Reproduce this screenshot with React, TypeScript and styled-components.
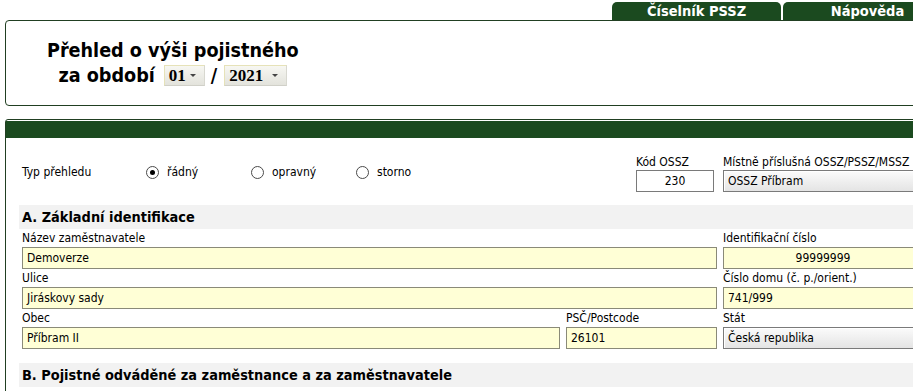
import React from 'react'
import styled, { createGlobalStyle } from 'styled-components'

const FONT = '"DejaVu Sans Condensed", "DejaVu Sans", sans-serif'
const GREEN = '#1b4a1f'
const FRAME = '#213f22'

const GlobalStyle = createGlobalStyle`
  html, body {
    margin: 0;
    padding: 0;
    overflow: hidden;
    background: #fff;
  }
  body {
    font-family: ${FONT};
    font-size: 12px;
    color: #000;
  }
`

const Page = styled.div`
  width: 948px;
  padding: 0 5px;
`

const TabBar = styled.div`
  display: flex;
  justify-content: flex-end;
  gap: 2px;
  padding-top: 2px;
  margin-right: 1px;
`

const Tab = styled.div`
  width: 169px;
  height: 18px;
  background: ${GREEN};
  border-radius: 5px 5px 0 0;
  color: #fff;
  font-weight: bold;
  font-size: 14.5px;
  line-height: 18px;
  text-align: center;
`

const HeaderBox = styled.div`
  height: 84px;
  border: 1px solid ${FRAME};
  border-radius: 4px;
  padding-left: 41px;
`

const Title = styled.div`
  display: inline-block;
  margin-top: 17px;
  text-align: center;
  font-size: 19.6px;
  font-weight: bold;
  line-height: 25px;
`

const TitleLine = styled.div`
  display: flex;
  justify-content: center;
  align-items: center;
`

const PeriodLabel = styled.span`
  margin-right: 9px;
`

const PeriodSelect = styled.div<{ $w: number }>`
  display: flex;
  align-items: center;
  justify-content: space-between;
  box-sizing: border-box;
  width: ${(p) => p.$w}px;
  height: 21px;
  padding: 0 8px 0 4px;
  background: linear-gradient(#f7f7f2, #e3e3dc);
  border: 1px solid #e6e2b8;
  border-right-color: #d8d8d0;
  border-bottom-color: #d0d0c8;
  font-family: "Liberation Serif", serif;
  font-size: 17px;
  font-weight: bold;
  line-height: 19px;
`

const Caret = styled.span`
  width: 0;
  height: 0;
  border-left: 3px solid transparent;
  border-right: 3px solid transparent;
  border-top: 3px solid #444;
`

const Slash = styled.span`
  margin: 0 7px 0 6px;
`

const Panel = styled.div`
  margin-top: 13px;
  height: 300px;
  border: 1px solid ${FRAME};
  border-radius: 3px 3px 0 0;
  padding: 1px 0 0 0;
`

const PanelBar = styled.div`
  height: 17px;
  background: ${GREEN};
`

const PanelBody = styled.div`
  padding: 14px 0 0 13px;
`

const TopRow = styled.div`
  display: flex;
  align-items: center;
  width: 901px;
  height: 40px;
  padding-left: 3px;
`

const TypeLabel = styled.div`
  width: 124px;
  flex: none;
`

const RadioOption = styled.label`
  display: flex;
  align-items: center;
  flex: none;
  width: 105px;
  gap: 8px;
`

const RadioCircle = styled.span<{ $checked?: boolean }>`
  position: relative;
  box-sizing: border-box;
  width: 13px;
  height: 13px;
  border: 1px solid #4a4a4a;
  border-radius: 50%;
  background: #fff;

  &::after {
    content: '';
    display: ${(p) => (p.$checked ? 'block' : 'none')};
    position: absolute;
    left: 3px;
    top: 3px;
    width: 5px;
    height: 5px;
    border-radius: 50%;
    background: #000;
  }
`

const Spacer = styled.div`
  flex: 1;
`

const FieldGrid = styled.div`
  display: grid;
  grid-template-columns: 538px 151px 200px;
  column-gap: 6px;
  padding-left: 3px;
`

const Field = styled.div<{ $span?: number }>`
  grid-column: span ${(p) => p.$span || 1};
  min-width: 0;
`

const CodeField = styled.div`
  flex: none;
  width: 78px;
  margin-right: 9px;
`

const OfficeField = styled.div`
  flex: none;
  width: 200px;
  min-width: 0;
`

const Label = styled.div<{ $low?: boolean }>`
  height: 18px;
  line-height: ${(p) => (p.$low ? '21px' : '19px')};
  white-space: nowrap;
`

type BoxKind = 'yellow' | 'white' | 'select'

const Box = styled.div<{ $kind: BoxKind; $align?: string }>`
  box-sizing: border-box;
  height: 22px;
  padding: 0 4px;
  line-height: 20px;
  white-space: nowrap;
  text-align: ${(p) => p.$align || 'left'};
  border: 1px solid ${(p) => (p.$kind === 'yellow' ? '#8a8a78' : '#7a7a7a')};
  background: ${(p) =>
    p.$kind === 'yellow'
      ? '#ffffd6'
      : p.$kind === 'select'
        ? 'linear-gradient(#fbfbfb, #e4e4e4)'
        : '#fff'};
  box-shadow: ${(p) => (p.$kind === 'select' ? 'inset 1px 1px 0 #fff' : 'none')};
`

const SectionHead = styled.div<{ $gap: number }>`
  margin-top: ${(p) => p.$gap}px;
  height: 24px;
  padding-left: 3px;
  background: #f2f2f2;
  font-size: 14.4px;
  font-weight: bold;
  line-height: 24px;
`

const radios = [
  { label: 'řádný', checked: true },
  { label: 'opravný', checked: false },
  { label: 'storno', checked: false },
]

export default function App() {
  return (
    <Page>
      <GlobalStyle />
      <TabBar>
        <Tab>Číselník PSSZ</Tab>
        <Tab>Nápověda</Tab>
      </TabBar>
      <HeaderBox>
        <Title>
          <TitleLine>Přehled o výši pojistného</TitleLine>
          <TitleLine>
            <PeriodLabel>za období</PeriodLabel>
            <PeriodSelect $w={41}>
              01
              <Caret />
            </PeriodSelect>
            <Slash>/</Slash>
            <PeriodSelect $w={63}>
              2021
              <Caret />
            </PeriodSelect>
          </TitleLine>
        </Title>
      </HeaderBox>
      <Panel>
        <PanelBar />
        <PanelBody>
          <TopRow>
            <TypeLabel>Typ přehledu</TypeLabel>
            {radios.map((r) => (
              <RadioOption key={r.label}>
                <RadioCircle $checked={r.checked} />
                {r.label}
              </RadioOption>
            ))}
            <Spacer />
            <CodeField>
              <Label $low>Kód OSSZ</Label>
              <Box $kind="white" $align="center">
                230
              </Box>
            </CodeField>
            <OfficeField>
              <Label $low>Místně příslušná OSSZ/PSSZ/MSSZ Brno</Label>
              <Box $kind="select">OSSZ Příbram</Box>
            </OfficeField>
          </TopRow>
          <SectionHead $gap={13}>A. Základní identifikace</SectionHead>
          <FieldGrid>
            <Field $span={2}>
              <Label>Název zaměstnavatele</Label>
              <Box $kind="yellow">Demoverze</Box>
            </Field>
            <Field>
              <Label>Identifikační číslo</Label>
              <Box $kind="yellow" $align="center">
                99999999
              </Box>
            </Field>
            <Field $span={2}>
              <Label>Ulice</Label>
              <Box $kind="yellow">Jiráskovy sady</Box>
            </Field>
            <Field>
              <Label>Číslo domu (č. p./orient.)</Label>
              <Box $kind="yellow">741/999</Box>
            </Field>
            <Field>
              <Label>Obec</Label>
              <Box $kind="yellow">Příbram II</Box>
            </Field>
            <Field>
              <Label>PSČ/Postcode</Label>
              <Box $kind="yellow">26101</Box>
            </Field>
            <Field>
              <Label>Stát</Label>
              <Box $kind="select">Česká republika</Box>
            </Field>
          </FieldGrid>
          <SectionHead $gap={14}>B. Pojistné odváděné za zaměstnance a za zaměstnavatele</SectionHead>
        </PanelBody>
      </Panel>
    </Page>
  )
}
